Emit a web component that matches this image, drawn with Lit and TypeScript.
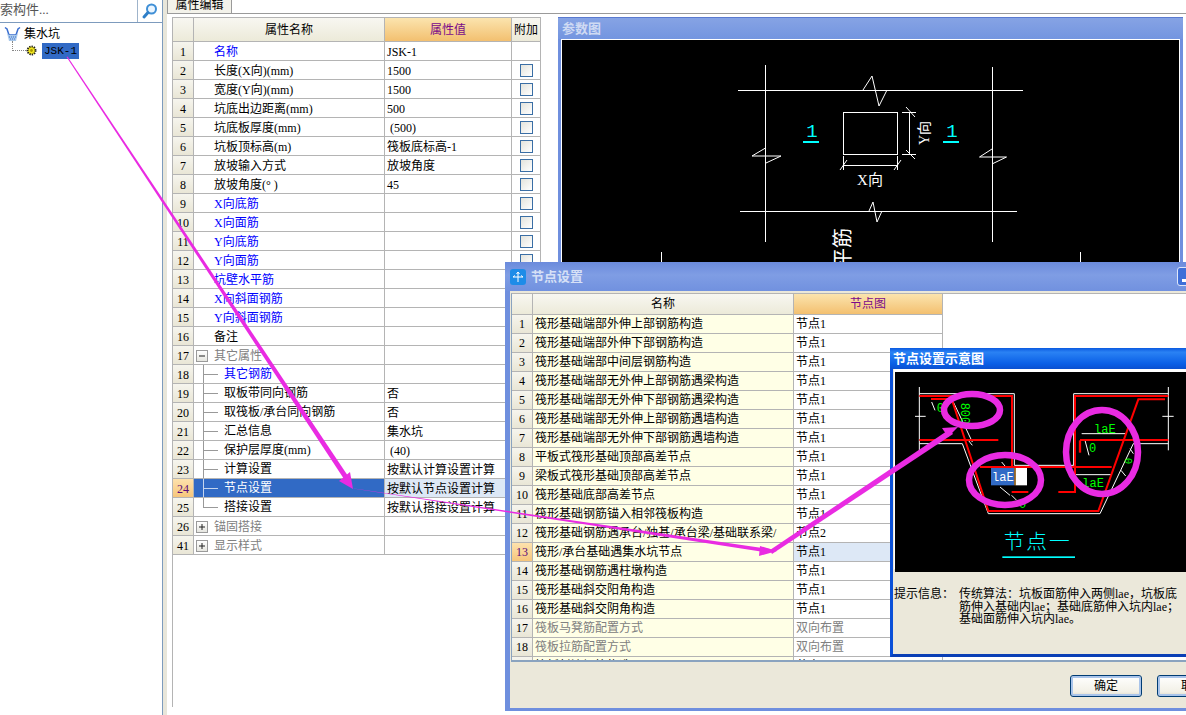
import { LitElement, html, css, svg, nothing } from 'lit';
import { customElement } from 'lit/decorators.js';

type Prop = {
  no: number;
  name: string;
  value?: string;
  kind?: 'blue' | 'group' | 'child' | 'child-blue';
  open?: boolean;
  last?: boolean;
  check?: boolean;
};

const props: Prop[] = [
  { no: 1, name: '名称', value: 'JSK-1', kind: 'blue' },
  { no: 2, name: '长度(X向)(mm)', value: '1500', check: true },
  { no: 3, name: '宽度(Y向)(mm)', value: '1500', check: true },
  { no: 4, name: '坑底出边距离(mm)', value: '500', check: true },
  { no: 5, name: '坑底板厚度(mm)', value: ' (500)', check: true },
  { no: 6, name: '坑板顶标高(m)', value: '筏板底标高-1', check: true },
  { no: 7, name: '放坡输入方式', value: '放坡角度', check: true },
  { no: 8, name: '放坡角度(° )', value: '45', check: true },
  { no: 9, name: 'X向底筋', kind: 'blue', check: true },
  { no: 10, name: 'X向面筋', kind: 'blue', check: true },
  { no: 11, name: 'Y向底筋', kind: 'blue', check: true },
  { no: 12, name: 'Y向面筋', kind: 'blue', check: true },
  { no: 13, name: '坑壁水平筋', kind: 'blue' },
  { no: 14, name: 'X向斜面钢筋', kind: 'blue' },
  { no: 15, name: 'Y向斜面钢筋', kind: 'blue' },
  { no: 16, name: '备注' },
  { no: 17, name: '其它属性', kind: 'group', open: true },
  { no: 18, name: '其它钢筋', kind: 'child-blue' },
  { no: 19, name: '取板带同向钢筋', value: '否', kind: 'child' },
  { no: 20, name: '取筏板/承台同向钢筋', value: '否', kind: 'child' },
  { no: 21, name: '汇总信息', value: '集水坑', kind: 'child' },
  { no: 22, name: '保护层厚度(mm)', value: ' (40)', kind: 'child' },
  { no: 23, name: '计算设置', value: '按默认计算设置计算', kind: 'child' },
  { no: 24, name: '节点设置', value: '按默认节点设置计算', kind: 'child' },
  { no: 25, name: '搭接设置', value: '按默认搭接设置计算', kind: 'child', last: true },
  { no: 26, name: '锚固搭接', kind: 'group' },
  { no: 41, name: '显示样式', kind: 'group' },
];

const nodes: [string, string][] = [
  ['筏形基础端部外伸上部钢筋构造', '节点1'],
  ['筏形基础端部外伸下部钢筋构造', '节点1'],
  ['筏形基础端部中间层钢筋构造', '节点1'],
  ['筏形基础端部无外伸上部钢筋遇梁构造', '节点1'],
  ['筏形基础端部无外伸下部钢筋遇梁构造', '节点1'],
  ['筏形基础端部无外伸上部钢筋遇墙构造', '节点1'],
  ['筏形基础端部无外伸下部钢筋遇墙构造', '节点1'],
  ['平板式筏形基础顶部高差节点', '节点1'],
  ['梁板式筏形基础顶部高差节点', '节点1'],
  ['筏形基础底部高差节点', '节点1'],
  ['筏形基础钢筋锚入相邻筏板构造', '节点1'],
  ['筏形基础钢筋遇承台/独基/承台梁/基础联系梁/', '节点2'],
  ['筏形/承台基础遇集水坑节点', '节点1'],
  ['筏形基础钢筋遇柱墩构造', '节点1'],
  ['筏形基础斜交阳角构造', '节点1'],
  ['筏形基础斜交阴角构造', '节点1'],
  ['筏板马凳筋配置方式', '双向布置'],
  ['筏板拉筋配置方式', '双向布置'],
  ['筏板封边钢筋构造', '节点1'],
];

@customElement('app-root')
export class AppRoot extends LitElement {
  static styles = css`
    :host {
      display: block;
      position: relative;
      width: 1186px;
      height: 715px;
      overflow: hidden;
      background: #fff;
      color: #000;
      font: 12px/1 'Liberation Serif', 'Noto Sans CJK SC', sans-serif;
    }
    .shell {
      display: flex;
      height: 715px;
    }

    /* left tree */
    .left {
      width: 162px;
      display: flex;
      flex-direction: column;
      border-right: 1px solid #7d9bbd;
      box-sizing: content-box;
    }
    .search {
      display: flex;
      height: 22px;
      border-bottom: 1px solid #7d9bbd;
    }
    .search .input {
      width: 137px;
      border-right: 1px solid #9fb4cb;
      overflow: hidden;
      white-space: nowrap;
      color: #555;
      font-size: 13px;
      line-height: 20px;
      text-indent: -13px;
    }
    .search .btn {
      flex: 1;
      display: flex;
      align-items: center;
      justify-content: center;
    }
    .tree {
      flex: 1;
      padding-top: 2px;
    }
    .tree .node {
      display: flex;
      align-items: center;
      height: 17px;
    }
    .tree .root {
      padding-left: 4px;
      gap: 3px;
    }
    .tree .leaf {
      padding-left: 12px;
    }
    .tree .dots {
      width: 13px;
      height: 9px;
      margin-top: -9px;
      border-left: 1px dotted #888;
      border-bottom: 1px dotted #888;
    }
    .tree .sel {
      margin-left: 5px;
      width: 37px;
      height: 16px;
      line-height: 16px;
      background: #316ac5;
      color: #000;
      text-align: center;
      font-family: 'Liberation Mono', monospace;
      font-size: 11px;
    }

    /* main */
    .main {
      flex: 1;
      min-width: 0;
      background: #fff;
      border-left: 4px solid #e8e6da;
    }
    .tabs {
      display: flex;
      height: 14px;
      border-bottom: 1px solid #9a9a9a;
      box-sizing: border-box;
    }
    .tab {
      width: 63px;
      height: 13px;
      background: #f3f2ea;
      border-right: 1px solid #9a9a9a;
      border-left: 1px solid #9a9a9a;
      line-height: 10px;
      text-align: center;
      overflow: hidden;
    }
    .body {
      display: flex;
      padding: 3px 3px 0 5px;
      gap: 17px;
    }

    /* property grid */
    .grid {
      border-top: 1px solid #b4b4b4;
      border-left: 1px solid #b4b4b4;
      flex: none;
    }
    .r {
      display: grid;
      height: 19px;
    }
    .props .r {
      grid-template-columns: 21px 191px 127px 29px;
    }
    .props .r.head {
      height: 24px;
    }
    .props .c {
      padding-top: 1px;
    }
    .c {
      box-sizing: border-box;
      border-right: 1px solid #b4b4b4;
      border-bottom: 1px solid #b4b4b4;
      line-height: 18px;
      white-space: nowrap;
      overflow: hidden;
      display: flex;
      align-items: center;
      min-width: 0;
    }
    .c.no {
      justify-content: center;
      background: linear-gradient(#f6f5ee, #e9e6d6);
    }
    .c.th {
      justify-content: center;
      background: linear-gradient(#f8f7f1, #ecead9);
    }
    .c.th.on {
      background: linear-gradient(#fbe4ae, #f3c070);
      color: #7a0a8a;
    }
    .c.no.on {
      background: linear-gradient(#fde2ad, #f6c67c);
      color: #5a0a7a;
    }
    .name {
      padding-left: 20px;
    }
    .name.blue {
      color: #0000ff;
    }
    .name.group {
      padding-left: 2px;
      color: #808080;
    }
    .name.child {
      padding-left: 9px;
      padding-top: 0 !important;
    }
    .name.sel {
      background: #316ac5;
      color: #fff;
    }
    .val {
      padding-left: 2px;
      white-space: pre;
    }
    .val.sel {
      background: #dde8f6;
    }
    .exp {
      width: 10px;
      height: 10px;
      margin-right: 6px;
      border: 1px solid #9a9a9a;
      background: linear-gradient(#fff, #e6e6e0);
      flex: none;
      box-sizing: content-box;
    }
    .branch {
      position: relative;
      width: 21px;
      height: 19px;
      flex: none;
    }
    .branch i {
      position: absolute;
      background: #999;
    }
    .branch .v {
      left: 0;
      top: 0;
      width: 1px;
      height: 19px;
    }
    .branch .v.end {
      height: 9px;
    }
    .branch .h {
      left: 0;
      top: 9px;
      width: 15px;
      height: 1px;
    }
    .name.sel .branch i {
      background: #c4d4ee;
    }
    .check {
      width: 11px;
      height: 11px;
      margin: 0 auto;
      border: 1px solid #3a6ea5;
      background: linear-gradient(135deg, #e3e3dc, #fff);
    }

    /* parameter view */
    .param {
      width: 625px;
      height: 690px;
      flex: none;
      padding: 0 3px 3px 3px;
      box-sizing: border-box;
      background: #6f8fde;
      border-top: 1px solid #5a7ad0;
    }
    .param .title {
      height: 21px;
      line-height: 21px;
      font-size: 13px;
      font-weight: bold;
      color: #cfdaf3;
      background: linear-gradient(#86a3e4, #7395e0);
      margin: 0 -3px;
      padding-left: 4px;
    }
    .param .view {
      height: 650px;
      border: 1px solid #fff;
      background: #000;
    }
    svg {
      display: block;
    }
    .cad text {
      font-family: 'Liberation Serif', 'Noto Sans CJK SC', sans-serif;
    }
    .cad .mono {
      font-family: 'Liberation Mono', monospace;
    }

    /* windows */
    .win {
      position: absolute;
      box-sizing: border-box;
      display: flex;
      flex-direction: column;
    }
    .dialog {
      left: 505px;
      top: 262px;
      width: 700px;
      height: 449px;
      background: #ebe8da;
      border: 5px solid #6f8fde;
      border-top: 0;
      border-bottom: 3px solid #6f8fde;
    }
    .bar {
      display: flex;
      align-items: center;
      height: 29px;
      margin: 0 -5px;
      padding: 0 9px 0 5px;
      flex: none;
      background: linear-gradient(#6b8bdc, #7f9de4 45%, #7191df);
      color: #d6e0f6;
      font-size: 13px;
      font-weight: bold;
    }
    .bar .ico {
      width: 16px;
      height: 16px;
      margin-right: 5px;
      flex: none;
    }
    .bar .min {
      margin-left: auto;
      width: 19px;
      height: 19px;
      border-radius: 3px;
      border: 1px solid #dfe7fa;
      box-sizing: border-box;
      background: #3f6fd8;
      position: relative;
    }
    .bar .min::after {
      content: '';
      position: absolute;
      left: 4px;
      bottom: 3px;
      width: 8px;
      height: 3px;
      background: #fff;
    }
    .nodes {
      margin: 2px 0 0 1px;
      height: 369px;
      flex: none;
      overflow: hidden;
      background: #fff;
      border-left: 1px solid #8aa3bf;
      border-top: 1px solid #b4b4b4;
      border-bottom: 2px solid #8aa3bf;
      box-sizing: border-box;
    }
    .nodes .r {
      grid-template-columns: 21px 261px 149px;
    }
    .nodes .r.head {
      height: 21px;
    }
    .nodes .name {
      padding-left: 2px;
      background: #ffffe6;
    }
    .nodes .name.off,
    .nodes .val.off {
      color: #808080;
    }
    .foot {
      flex: 1;
      display: flex;
      gap: 15px;
      padding: 13px 0 0 560px;
    }
    .btn-x {
      width: 72px;
      height: 22px;
      flex: none;
      text-align: center;
      line-height: 20px;
      box-sizing: border-box;
      background: linear-gradient(#fff, #f2f0e6 80%, #dcd8c8);
      border: 1px solid #003c74;
      border-radius: 3px;
      box-shadow: inset 0 0 0 2px #a9c4ea;
    }
    .sub {
      left: 890px;
      top: 348px;
      width: 320px;
      height: 309px;
      border: 3px solid #0a50d8;
      border-top: 0;
      border-bottom-color: #0a3fb5;
      background: #ebe8da;
    }
    .sub .cap {
      height: 21px;
      margin: 0 -3px;
      padding-left: 3px;
      flex: none;
      line-height: 21px;
      color: #fff;
      font-size: 13px;
      font-weight: bold;
      background: linear-gradient(#0b5ae0, #2a82f4 20%, #0a5fe6 75%, #0a50d0);
    }
    .sub .pic {
      margin: 3px 0 0 2px;
      width: 320px;
      height: 200px;
      background: #000;
      flex: none;
      box-shadow: -1px -3px 0 #fff;
    }
    .hint {
      display: flex;
      padding: 16px 0 0 1px;
      font-size: 12px;
      line-height: 12.5px;
    }
    .hint .k {
      width: 65px;
      flex: none;
    }
    .overlay {
      position: absolute;
      left: 0;
      top: 0;
      pointer-events: none;
    }
  `;

  renderProp(p: Prop) {
    const sel = p.no === 24;
    const child = p.kind === 'child' || p.kind === 'child-blue';
    const nameCls = [
      'c name',
      p.kind === 'blue' || p.kind === 'child-blue' ? 'blue' : '',
      p.kind === 'group' ? 'group' : '',
      child ? 'child' : '',
      sel ? 'sel' : '',
    ].join(' ');
    return html`<div class="r">
      <div class="c no ${sel ? 'on' : ''}">${p.no}</div>
      <div class=${nameCls}>
        ${p.kind === 'group' ? this.expander(!!p.open) : nothing}
        ${child
          ? html`<span class="branch"><i class="v ${p.last ? 'end' : ''}"></i><i class="h"></i></span>`
          : nothing}
        ${p.name}
      </div>
      <div class="c val ${sel ? 'sel' : ''}">${p.value ?? ''}</div>
      <div class="c">${p.check ? html`<div class="check"></div>` : nothing}</div>
    </div>`;
  }

  expander(open: boolean) {
    return html`<span class="exp">
      <svg width="10" height="10" viewBox="0 0 10 10">
        <path d="M2 5h6${open ? '' : 'M5 2v6'}" stroke="#222" fill="none" />
      </svg>
    </span>`;
  }

  renderNode(n: [string, string], i: number) {
    const off = i === 16 || i === 17;
    const sel = i === 12;
    return html`<div class="r">
      <div class="c no ${sel ? 'on' : ''}">${i + 1}</div>
      <div class="c name ${off ? 'off' : ''}">${n[0]}</div>
      <div class="c val ${off ? 'off' : ''} ${sel ? 'sel' : ''}">${n[1]}</div>
    </div>`;
  }

  paramDrawing() {
    return svg`<svg class="cad" width="618" height="650" viewBox="562 40 618 650">
      <g stroke="#fff" fill="none" shape-rendering="crispEdges">
        <path d="M765.5 65V242M992.5 67V242M738 90H1023M740 211H1017M661.5 252V270M1080.5 252V270" />
        <path d="M843.5 112.5H897.5V154.5H843.5Z" />
        <path d="M902 112.5H916M902 154.5H916M909.5 112V154M843.5 165.5H897.5M843.5 156V170M897.5 156V170" />
      </g>
      <g stroke="#fff" fill="none">
        <path d="M863 90L872 76L879 106L887 90" />
        <path d="M869 211L873 202L877 222L882 211" />
        <path d="M765.5 148L752 156H781L766 163" />
        <path d="M992 149L979.5 157H1006.5L992 164" />
        <path d="M906 107L915 117M906 150L915 159M840 170L847 160M894 170L901 160" />
      </g>
      <g fill="#fff">
        <text x="870" y="185" text-anchor="middle" font-size="15">X向</text>
        <text transform="translate(929 133) rotate(-90)" text-anchor="middle" font-size="14">Y向</text>
        <text transform="translate(850 268) rotate(-90)" font-size="20">平筋</text>
      </g>
      <g fill="#00ffff">
        <text class="mono" x="812" y="137" font-size="19" text-anchor="middle">1</text>
        <text class="mono" x="952" y="137" font-size="19" text-anchor="middle">1</text>
        <rect x="803" y="141" width="16" height="2" />
        <rect x="943" y="141" width="16" height="2" />
      </g>
    </svg>`;
  }

  // coordinates follow a 3x scale of the diagram, the viewBox brings them back
  nodeDrawing() {
    return svg`<svg class="cad" width="320" height="200" viewBox="30 80 960 600">
      <g stroke="#fff" stroke-width="3" fill="none">
        <path d="M103 125V315M850 125V315M103 145H388V360H566V145H850" />
        <path d="M103 295H232L310 505H645L745 295H850" />
        <path d="M205 170L262 290M570 388H680M590 265H720" />
        <path d="M90 213H122M832 213H866M140 170L150 195M250 285L262 300M350 350L365 368M345 425L375 450M380 450L395 465M600 285L612 330M735 310L745 325M708 375L722 392" />
      </g>
      <g stroke="#f00" stroke-width="6" fill="none">
        <path d="M103 152H381V365M103 284H340M138 161H200L310 497H640L760 162H840" />
        <path d="M850 152H570V440H520M585 284H850M285 365H680M380 440H430" />
        <path d="M585 285V322" stroke-width="7" />
      </g>
      <g fill="#00ff00" font-size="36" class="greens">
        <text class="mono" x="627" y="262">laE</text>
        <text class="mono" x="592" y="426">laE</text>
        <text class="mono" x="612" y="320">0</text>
        <text class="mono" x="155" y="200">0</text>
        <text class="mono" x="402" y="487">0</text>
        <text class="mono" transform="translate(228 172) rotate(90)">800</text>
        <text class="mono" transform="translate(720 338) rotate(90)" font-size="30">0</text>
      </g>
      <rect x="392" y="368" width="34" height="52" fill="#fff" />
      <rect x="318" y="368" width="70" height="52" fill="#316ac5" />
      <rect x="388" y="368" width="4" height="52" fill="#c8872a" />
      <text class="mono" x="321" y="406" fill="#fff" font-size="36">laE</text>
      <text x="458" y="612" fill="#00ffff" font-size="62" text-anchor="middle" font-weight="300" letter-spacing="6">节点一</text>
      <rect x="352" y="633" width="218" height="5" fill="#00ffff" />
    </svg>`;
  }

  // magenta annotations lie over all windows
  overlay() {
    const pink = '#e92be2';
    return svg`<svg class="overlay" width="1186" height="715" viewBox="0 0 1186 715">
      <g fill=${pink}>
        <path d="M66.5 57L67.5 56.5L348 476L344 479Z" />
        <path d="M353 489L339 481L350 472Z" />
        <path d="M353 488.5L354 488.5L770 549L770 553Z" />
        <path d="M777 551L759 556L760 546Z" />
        <path d="M770 550L950 429L953 434L772 554Z" />
        <path d="M958 427L948 437L942 428Z" />
      </g>
      <g fill="none" stroke=${pink} stroke-width="6.5">
        <ellipse cx="972" cy="410" rx="28" ry="16" />
        <ellipse cx="1005" cy="480" rx="36" ry="25" />
        <ellipse cx="1102" cy="452" rx="36" ry="42" />
      </g>
    </svg>`;
  }

  render() {
    return html`<div class="shell">
        <div class="left">
          <div class="search">
            <div class="input">搜索构件...</div>
            <div class="btn">
              <svg width="18" height="18" viewBox="0 0 18 18">
                <circle cx="10.5" cy="7" r="4.5" fill="#eaf5ff" stroke="#3f8fd6" stroke-width="2" />
                <path d="M7 10.5L3 15" stroke="#2f7fc8" stroke-width="3" stroke-linecap="round" />
              </svg>
            </div>
          </div>
          <div class="tree">
            <div class="node root">
              <svg width="17" height="16" viewBox="0 0 17 16">
                <path d="M1 1.5L3 3L5 9H12L14 3L16 1.5" stroke="#3a6ed0" stroke-width="1.5" fill="none" />
                <path d="M3 7L5 15H12L14 7L12 9H5Z" fill="#a8c8ea" />
                <path d="M5 11H12M6 13H11" stroke="#3a6ed0" stroke-dasharray="1 1" />
              </svg>
              集水坑
            </div>
            <div class="node leaf">
              <div class="dots"></div>
              <svg width="11" height="11" viewBox="0 0 11 11">
                <circle cx="5.5" cy="5.5" r="4" fill="#f4e81e" stroke="#222" stroke-dasharray="1.3 1" stroke-width="2" />
                <circle cx="5.5" cy="5.5" r="1.4" fill="#a89800" />
              </svg>
              <div class="sel">JSK-1</div>
            </div>
          </div>
        </div>
        <div class="main">
          <div class="tabs"><div class="tab">属性编辑</div></div>
          <div class="body">
            <div class="grid props">
              <div class="r head">
                <div class="c th"></div>
                <div class="c th">属性名称</div>
                <div class="c th on">属性值</div>
                <div class="c th">附加</div>
              </div>
              ${props.map((p) => this.renderProp(p))}
            </div>
            <div class="param">
              <div class="title">参数图</div>
              <div class="view">${this.paramDrawing()}</div>
            </div>
          </div>
        </div>
      </div>

      <div class="win dialog">
        <div class="bar">
          <svg class="ico" viewBox="0 0 16 16">
            <rect width="16" height="16" rx="3" fill="#1e8ce8" />
            <path d="M8 3V13M3 8H13M8 3L6.5 5M8 3L9.5 5M3 8L5 6.5M13 8L11 6.5" stroke="#fff" fill="none" />
          </svg>
          节点设置
          <div class="min"></div>
        </div>
        <div class="grid nodes">
          <div class="r head">
            <div class="c th"></div>
            <div class="c th">名称</div>
            <div class="c th on">节点图</div>
          </div>
          ${nodes.map((n, i) => this.renderNode(n, i))}
        </div>
        <div class="foot">
          <div class="btn-x">确定</div>
          <div class="btn-x">取消</div>
        </div>
      </div>

      <div class="win sub">
        <div class="cap">节点设置示意图</div>
        <div class="pic">${this.nodeDrawing()}</div>
        <div class="hint">
          <div class="k">提示信息：</div>
          <div>
            传统算法：坑板面筋伸入两侧lae，坑板底<br />
            筋伸入基础内lae；基础底筋伸入坑内lae；<br />
            基础面筋伸入坑内lae。
          </div>
        </div>
      </div>

      ${this.overlay()}`;
  }
}
